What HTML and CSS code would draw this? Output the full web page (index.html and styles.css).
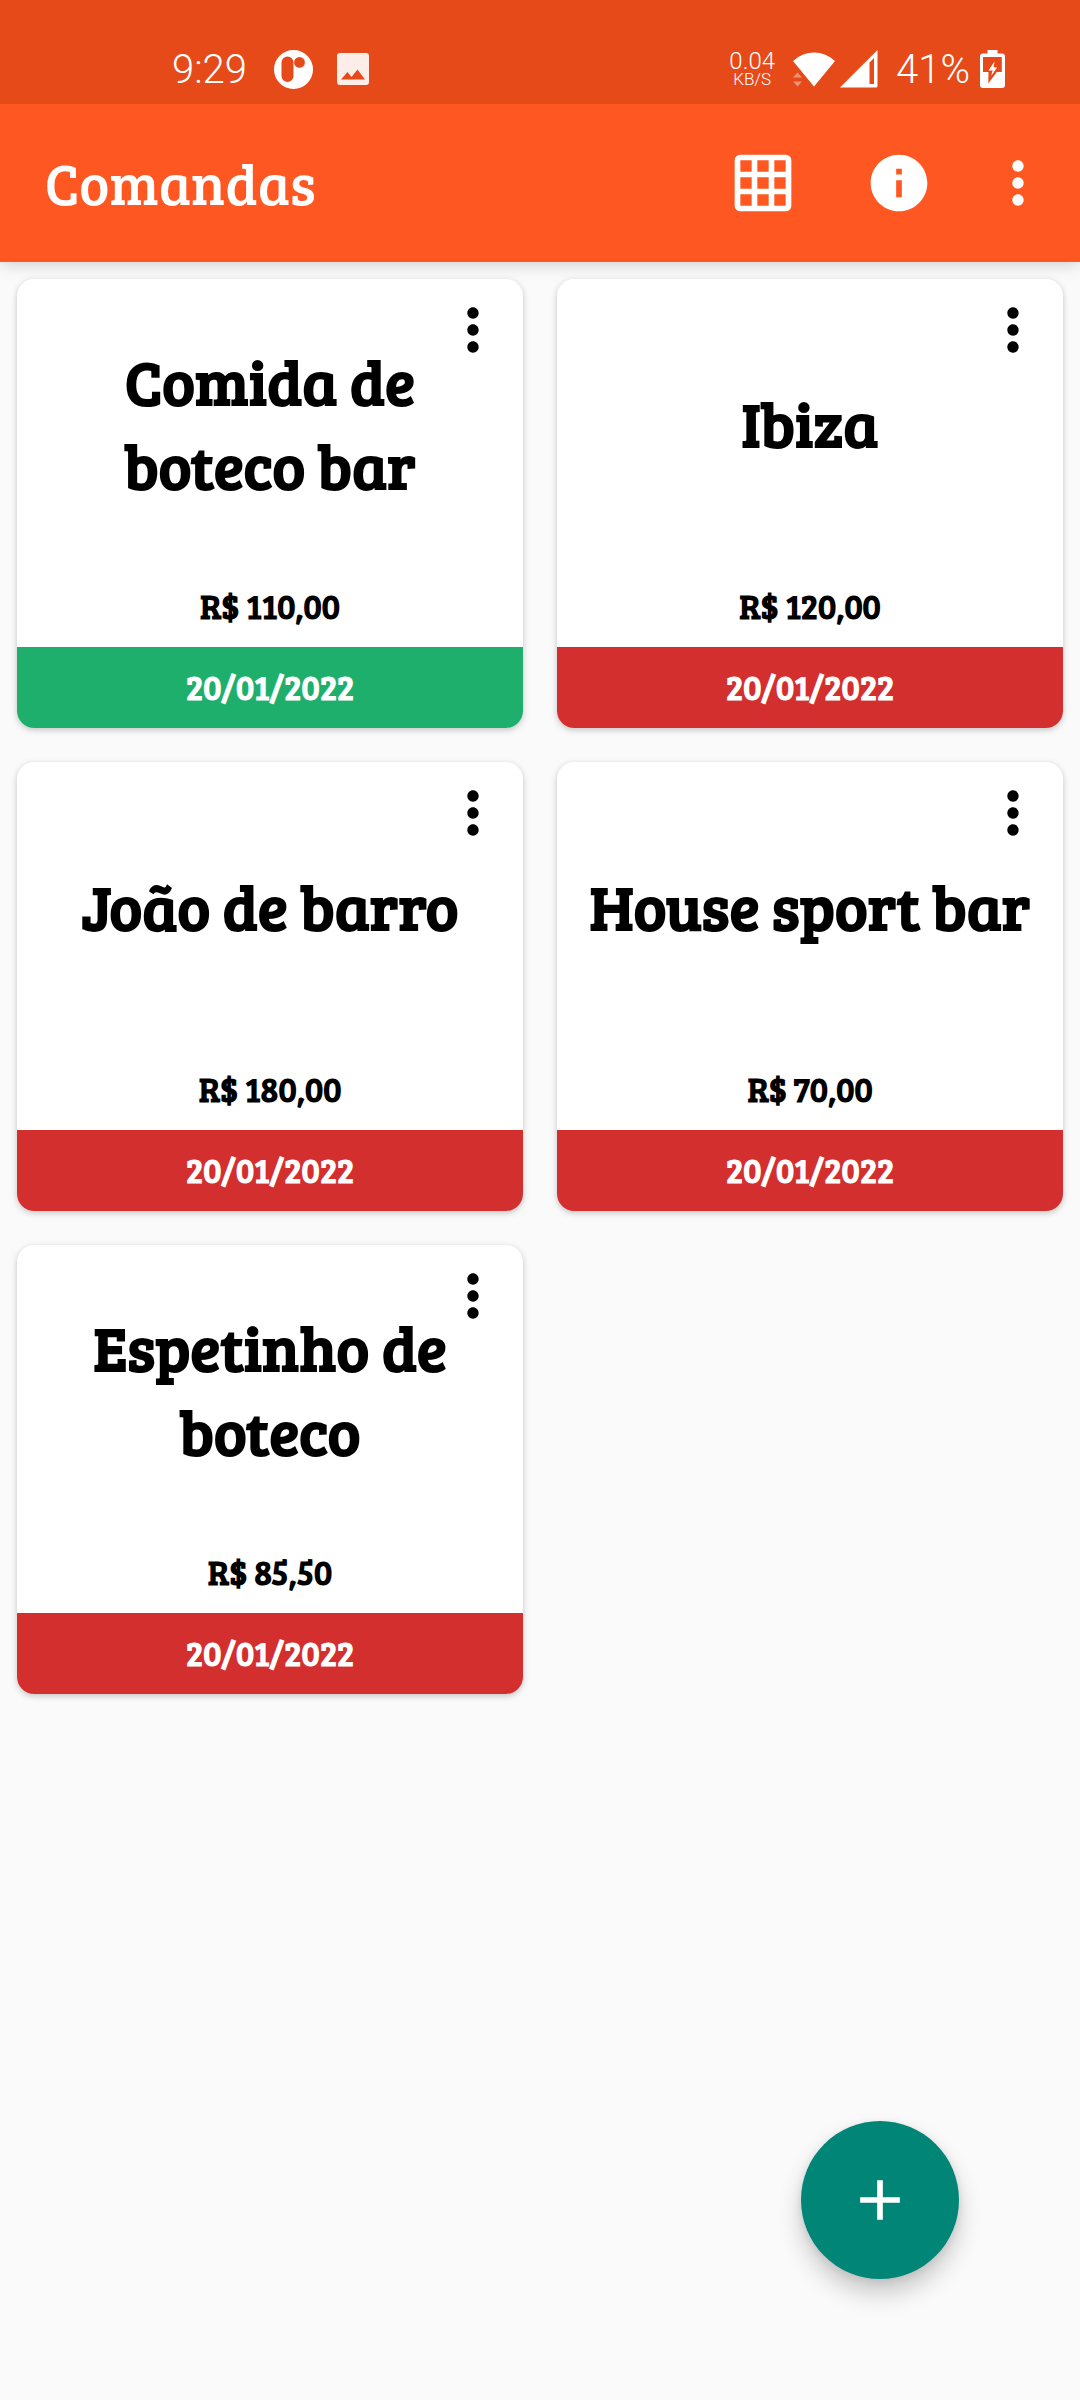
FILE: index.html
```html
<!DOCTYPE html>
<html lang="pt-BR">
<head>
<meta charset="utf-8">
<meta name="viewport" content="width=device-width, initial-scale=1">
<title>Comandas</title>
<link rel="stylesheet" href="styles.css">
</head>
<body>
<svg class="defs" aria-hidden="true">
  <symbol id="more" viewBox="0 0 24 24"><path d="M12 8c1.100 0 2-.9 2-2s-.9-2-2-2-2 .9-2 2 .9 2 2 2zm0 2c-1.100 0-2 .9-2 2s.9 2 2 2 2-.9 2-2-.9-2-2-2zm0 6c-1.100 0-2 .9-2 2s.9 2 2 2 2-.9 2-2-.9-2-2-2z"/></symbol>
</svg>

<div class="status">
  <div class="status-group">
    <span class="status-text">9:29</span>
    <svg class="app-icon" viewBox="0 0 39 39" aria-hidden="true"><path fill-rule="evenodd" d="M19.500 0a19.500 19.500 0 1 1 0 39a19.500 19.500 0 0 1 0-39zM13.500 6.500a6 6 0 0 0-6 6V26a6 6 0 0 0 12 0V12.500a6 6 0 0 0-6-6zM25.500 7a5.400 5.400 0 1 0 0 10.800a5.400 5.400 0 0 0 0-10.800z"/></svg>
    <svg class="image-icon" viewBox="0 0 32 32" aria-hidden="true"><path fill-rule="evenodd" d="M3 0h26a3 3 0 0 1 3 3v26a3 3 0 0 1-3 3H3a3 3 0 0 1-3-3V3a3 3 0 0 1 3-3zM4 26.500h24L20.500 16.500l-6 7.500-4-5z"/></svg>
  </div>
  <div class="status-group status-right">
    <div class="speed"><span class="speed-value">0.04</span><span class="speed-unit">KB/S</span></div>
    <svg class="wifi-icon" viewBox="0 0 42 36" aria-hidden="true"><path d="M21 35.500L0 10Q9 1.500 21 1.500T42 10z"/><path class="dim" d="M0 26.500l4.500-5 4.500 5zM0 30.500h9l-4.500 5z"/></svg>
    <svg class="signal-icon" viewBox="0 0 38 38" aria-hidden="true"><path fill-rule="evenodd" d="M37.500 0V36a1.500 1.500 0 0 1-1.500 1.500H0zM29.500 12.500V34h4.500V8z"/></svg>
    <span class="status-text charge">41%</span>
    <svg class="battery-icon" viewBox="0 0 25 38" aria-hidden="true"><path fill-rule="evenodd" d="M7.500 0h10v3.500h4.500a3 3 0 0 1 3 3V35a3 3 0 0 1-3 3H3a3 3 0 0 1-3-3V6.500a3 3 0 0 1 3-3h4.500zM3 7v15h5.500L8.300 33.500l8.500-11.500h5V7zM14.500 11.500l-6 9h4.200l-1.700 5.500 6-8.500h-3.800z"/><path d="M14.500 12.500l-5.500 7.500h4.200l-1.400 5 4.700-7.200h-3.300z"/></svg>
  </div>
</div>

<header class="appbar">
  <h1 class="appbar-title">Comandas</h1>
  <button class="bar-button" type="button" aria-label="Grade"><svg class="icon" viewBox="0 0 24 24"><path fill-rule="evenodd" d="M4 2h16a2 2 0 0 1 2 2v16a2 2 0 0 1-2 2H4a2 2 0 0 1-2-2V4a2 2 0 0 1 2-2zM4 4v4h4V4zM10 4v4h4V4zM16 4v4h4V4zM4 10v4h4v-4zM10 10v4h4v-4zM16 10v4h4v-4zM4 16v4h4v-4zM10 16v4h4v-4zM16 16v4h4v-4z"/></svg></button>
  <button class="bar-button" type="button" aria-label="Informações"><svg class="icon" viewBox="0 0 24 24"><path d="M12 2C6.480 2 2 6.480 2 12s4.480 10 10 10 10-4.480 10-10S17.520 2 12 2zm1 15h-2v-6h2v6zm0-8h-2V7h2v2z"/></svg></button>
  <button class="bar-button bar-more" type="button" aria-label="Mais opções"><svg class="icon"><use href="#more"/></svg></button>
</header>

<main class="grid">
  <article class="card">
    <h2 class="card-title">Comida de boteco bar</h2>
    <p class="price">R$ 110,00</p>
    <p class="date paid">20/01/2022</p>
    <button class="card-more" type="button" aria-label="Opções de Comida de boteco bar"><svg class="icon"><use href="#more"/></svg></button>
  </article>
  <article class="card">
    <h2 class="card-title">Ibiza</h2>
    <p class="price">R$ 120,00</p>
    <p class="date">20/01/2022</p>
    <button class="card-more" type="button" aria-label="Opções de Ibiza"><svg class="icon"><use href="#more"/></svg></button>
  </article>
  <article class="card">
    <h2 class="card-title">João de barro</h2>
    <p class="price">R$ 180,00</p>
    <p class="date">20/01/2022</p>
    <button class="card-more" type="button" aria-label="Opções de João de barro"><svg class="icon"><use href="#more"/></svg></button>
  </article>
  <article class="card">
    <h2 class="card-title">House sport bar</h2>
    <p class="price">R$ 70,00</p>
    <p class="date">20/01/2022</p>
    <button class="card-more" type="button" aria-label="Opções de House sport bar"><svg class="icon"><use href="#more"/></svg></button>
  </article>
  <article class="card">
    <h2 class="card-title">Espetinho de boteco</h2>
    <p class="price">R$ 85,50</p>
    <p class="date">20/01/2022</p>
    <button class="card-more" type="button" aria-label="Opções de Espetinho de boteco"><svg class="icon"><use href="#more"/></svg></button>
  </article>
</main>

<button class="fab" type="button" aria-label="Adicionar comanda"><svg class="icon" viewBox="0 0 24 24"><path d="M19 13h-6v6h-2v-6H5v-2h6V5h2v6h6v2z"/></svg></button>
</body>
</html>
```
FILE: styles.css
```css
* {
  box-sizing: border-box;
}

body {
  margin: 0;
  min-height: 100vh;
  background: #fafafa;
  color: #000;
  font-family: "Bree Serif", "Liberation Serif", serif;
  font-weight: 700;
}

h1, h2, p {
  margin: 0;
}

button {
  display: flex;
  align-items: center;
  justify-content: center;
  padding: 0;
  border: 0;
  background: none;
  color: inherit;
  cursor: pointer;
}

svg {
  display: block;
  flex: none;
  fill: currentColor;
}

.defs {
  position: absolute;
  width: 0;
  height: 0;
}

.icon {
  width: 68px;
  height: 68px;
}

/* Status bar */
.status {
  position: relative;
  z-index: 1;
  display: flex;
  justify-content: space-between;
  height: 104px;
  padding: 34px 75px 0 172px;
  background: #e64a19;
  color: #fff;
  font-family: Roboto, sans-serif;
  font-weight: 300;
}

.status-group {
  display: flex;
  align-items: center;
}

.status-text {
  padding-top: 2px;
  font-size: 40px;
  line-height: 48px;
}

.app-icon {
  width: 39px;
  height: 39px;
  margin-left: 27px;
}

.image-icon {
  width: 32px;
  height: 32px;
  margin-left: 24px;
  opacity: 0.9;
}

.speed {
  display: flex;
  flex-direction: column;
  align-items: center;
  margin-right: 18px;
}

.speed-value {
  font-size: 24px;
  line-height: 20px;
}

.speed-unit {
  font-size: 17px;
  line-height: 16px;
}

.wifi-icon {
  width: 42px;
  height: 36px;
}

.dim {
  opacity: 0.4;
}

.signal-icon {
  width: 38px;
  height: 38px;
  margin-left: 5px;
}

.charge {
  margin: 0 10px 0 18px;
}

.battery-icon {
  width: 25px;
  height: 38px;
}

/* App bar */
.appbar {
  position: relative;
  display: flex;
  align-items: center;
  min-height: 158px;
  padding: 0 11px 0 45px;
  background: #ff5722;
  color: #fff;
  box-shadow: 0 2px 16px rgba(0, 0, 0, 0.18);
}

.appbar-title {
  flex: 1;
  font-size: 57px;
  font-weight: 400;
  line-height: 72px;
}

.bar-button {
  width: 136px;
  height: 136px;
}

.bar-more {
  width: 102px;
}

/* Cards */
.grid {
  display: grid;
  grid-template-columns: 1fr 1fr;
  gap: 34px;
  padding: 17px;
}

.card {
  position: relative;
  display: flex;
  flex-direction: column;
  overflow: hidden;
  border-radius: 17px;
  background: #fff;
  box-shadow: 0 2px 6px rgba(0, 0, 0, 0.22);
  text-align: center;
}

.card-title {
  display: flex;
  align-items: center;
  justify-content: center;
  min-height: 286px;
  padding: 0 17px;
  font-size: 62px;
  line-height: 84px;
}

.price {
  font-size: 34px;
  line-height: 82px;
}

.date {
  padding-bottom: 1px;
  background: #d32f2f;
  color: #fff;
  font-size: 34px;
  line-height: 80px;
}

.paid {
  background: #1faf6c;
}

.card-more {
  position: absolute;
  top: 17px;
  right: 16px;
}

/* Floating action button */
.fab {
  position: fixed;
  right: 121px;
  bottom: 121px;
  width: 158px;
  height: 158px;
  border-radius: 50%;
  background: #018577;
  color: #fff;
  box-shadow: 0 14px 24px rgba(0, 0, 0, 0.2), 0 2px 10px rgba(0, 0, 0, 0.1);
}
```
